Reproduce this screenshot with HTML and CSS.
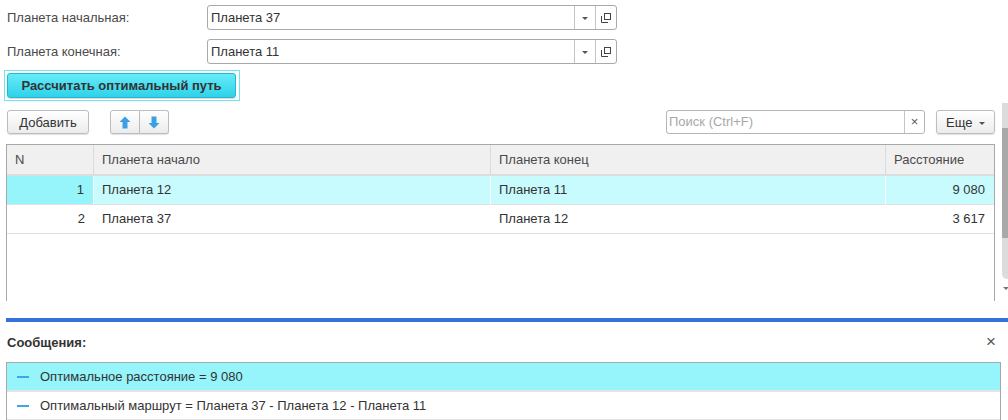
FILE: index.html
```html
<!DOCTYPE html>
<html lang="ru">
<head>
<meta charset="utf-8">
<title>Оптимальный путь</title>
<link rel="stylesheet" href="styles.css">
</head>
<body>
<div class="page">
  <div class="top">
    <div class="form">
      <div class="field">
        <div class="label">Планета начальная:</div>
        <div class="input">
          <div class="value">Планета 37</div>
          <div class="ibtn"><span class="tri"></span></div>
          <div class="ibtn"><svg width="10" height="10" viewBox="0 0 10 10"><rect x="3.5" y="0.5" width="6" height="6" fill="none" stroke="#444"/><path d="M0.5 3 V9.5 H7" fill="none" stroke="#444"/></svg></div>
        </div>
      </div>
      <div class="field second">
        <div class="label">Планета конечная:</div>
        <div class="input">
          <div class="value">Планета 11</div>
          <div class="ibtn"><span class="tri"></span></div>
          <div class="ibtn"><svg width="10" height="10" viewBox="0 0 10 10"><rect x="3.5" y="0.5" width="6" height="6" fill="none" stroke="#444"/><path d="M0.5 3 V9.5 H7" fill="none" stroke="#444"/></svg></div>
        </div>
      </div>
      <div class="focus">
        <button class="primary">Рассчитать оптимальный путь</button>
      </div>
      <div class="toolbar">
        <button class="btn add">Добавить</button>
        <div class="group">
          <button class="btn arrow"><svg width="12" height="13" viewBox="0 0 12 13"><path d="M6 0.5 L11.5 6 H8.5 V12.5 H3.5 V6 H0.5 Z" fill="#3d9fe3"/></svg></button>
          <button class="btn arrow"><svg width="12" height="13" viewBox="0 0 12 13"><path d="M6 12.5 L11.5 7 H8.5 V0.5 H3.5 V7 H0.5 Z" fill="#3d9fe3"/></svg></button>
        </div>
        <div class="spacer"></div>
        <div class="search">
          <div class="ph">Поиск (Ctrl+F)</div>
          <div class="clear">×</div>
        </div>
        <button class="btn more">Еще <span class="tri small"></span></button>
      </div>
      <div class="table">
        <div class="row head">
          <div class="c cn">N</div>
          <div class="c c1">Планета начало</div>
          <div class="c c2">Планета конец</div>
          <div class="c c3">Расстояние</div>
        </div>
        <div class="row sel">
          <div class="c cn num">1</div>
          <div class="c c1">Планета 12</div>
          <div class="c c2">Планета 11</div>
          <div class="c c3 num">9 080</div>
        </div>
        <div class="row">
          <div class="c cn num">2</div>
          <div class="c c1">Планета 37</div>
          <div class="c c2">Планета 12</div>
          <div class="c c3 num">3 617</div>
        </div>
      </div>
    </div>
    <div class="vscroll">
      <div class="track"><div class="thumb"></div></div>
      <div class="sarrow"></div>
    </div>
  </div>
  <div class="splitter"></div>
  <div class="msg-head">
    <div class="msg-title">Сообщения:</div>
    <div class="msg-close">×</div>
  </div>
  <div class="msgs">
    <div class="msg sel"><span class="dash"></span>Оптимальное расстояние = 9 080</div>
    <div class="msg"><span class="dash"></span>Оптимальный маршрут = Планета 37 - Планета 12 - Планета 11</div>
  </div>
</div>
</body>
</html>
```

FILE: styles.css
```css
* { box-sizing: border-box; }
html, body { margin: 0; padding: 0; background: #fff; }
body {
  font-family: "Liberation Sans", Arial, sans-serif;
  font-size: 13px;
  color: #4a4a4a;
  width: 1008px;
  height: 420px;
  overflow: hidden;
}
.page { width: 1008px; }
.top { display: flex; height: 318px; }
.form { width: 1002px; padding: 5px 7px 0 7px; }
.field { display: flex; align-items: center; height: 25px; }
.field.second { margin-top: 9px; }
.label { width: 200px; }
.input {
  width: 410px; height: 25px; display: flex;
  border: 1px solid #a9a9a9; border-radius: 3px; background: #fff;
}
.value { flex: 1; padding-left: 3px; line-height: 23px; color: #333; }
.ibtn {
  width: 21px; border-left: 1px solid #c4c4c4;
  display: flex; align-items: center; justify-content: center;
}
.tri {
  display: inline-block; width: 0; height: 0;
  border-left: 3px solid transparent; border-right: 3px solid transparent;
  border-top: 3px solid #555; margin-top: 1px;
}
.focus {
  margin-top: 6px; margin-left: -3px; width: 236px;
  border: 1px solid #6ee6ef; padding: 2px;
}
.primary {
  display: block; width: 229px; height: 25px;
  font-family: inherit; font-size: 13px; font-weight: bold; color: #333;
  background: linear-gradient(#66ebf9, #2fd2e9);
  border: 1px solid #29b6cb; border-radius: 3px;
  box-shadow: 0 1px 1px rgba(0,0,0,0.15);
  padding: 0;
}
.toolbar { display: flex; align-items: center; height: 24px; margin-top: 9px; }
.btn {
  height: 24px; font-family: inherit; font-size: 13px; color: #333;
  background: linear-gradient(#ffffff, #ececec);
  border: 1px solid #bdbdbd; border-radius: 3px;
  box-shadow: 0 1px 1px rgba(0,0,0,0.12);
  padding: 0;
}
.add { width: 82px; }
.group { display: flex; margin-left: 21px; }
.arrow {
  width: 30px; display: flex; align-items: center; justify-content: center;
}
.group .arrow:first-child { border-radius: 3px 0 0 3px; }
.group .arrow:last-child { border-radius: 0 3px 3px 0; border-left: none; width: 29px; }
.spacer { flex: 1; }
.search {
  width: 259px; height: 24px; display: flex;
  border: 1px solid #b5b5b5; border-radius: 3px; background: #fff;
}
.ph { flex: 1; padding-left: 2px; line-height: 22px; color: #a8a8a8; }
.clear {
  width: 20px; border-left: 1px solid #c4c4c4; text-align: center;
  line-height: 21px; font-size: 13px; color: #555;
}
.more { width: 59px; margin-left: 11px; }
.tri.small { margin-left: 3px; vertical-align: middle; }
.table {
  margin-top: 10px; margin-left: -1px; width: 989px; height: 157px;
  border: 1px solid #a8a8a8; border-bottom: none;
}
.row { display: flex; height: 29px; border-bottom: 1px solid #e2e2e2; color: #333; }
.row.head { height: 31px; background: #f0f0f0; border-bottom: 2px solid #dedede; color: #4a4a4a; }
.c { line-height: 28px; padding: 0 8px; white-space: nowrap; }
.head .c { line-height: 29px; }
.cn { width: 87px; }
.c1 { width: 397px; }
.c2 { width: 395px; }
.c3 { flex: 1; }
.head .c { border-right: 1px solid #dadada; }
.head .c3 { border-right: none; }
.num { text-align: right; padding-right: 9px; }
.row.sel { background: #c8fbfd; }
.row.sel .c { border-right: 1px solid #fff; }
.row.sel .c3 { border-right: none; }
.row.sel .cn { background: #96f4fb; }
.vscroll { width: 6px; padding-top: 103px; }
.track {
  height: 176px; background: #dcdcdc; border-radius: 0 0 0 5px;
  padding-top: 25px;
}
.thumb { height: 110px; background: #a9a9a9; }
.sarrow {
  margin-top: 8px; margin-left: 1px; width: 0; height: 0;
  border-left: 3px solid transparent; border-right: 3px solid transparent;
  border-top: 3px solid #777;
}
.splitter { height: 4px; margin-left: 6px; background: #3670dc; }
.msg-head {
  display: flex; align-items: center; justify-content: space-between;
  height: 40px; padding: 0 12px 0 7px;
}
.msg-title { font-weight: bold; color: #333; }
.msg-close { font-size: 17px; color: #555; }
.msgs {
  margin-left: 6px; width: 995px;
  border: 1px solid #a8a8a8; border-bottom: none;
}
.msg {
  height: 29px; display: flex; align-items: center; color: #333;
  border-bottom: 2px solid #e4e4e4;
}
.msg.sel { background: #96f4fb; }
.dash {
  display: inline-block; width: 12px; height: 2px; background: #3ea6e2;
  margin: 0 11px 0 10px;
}
```
